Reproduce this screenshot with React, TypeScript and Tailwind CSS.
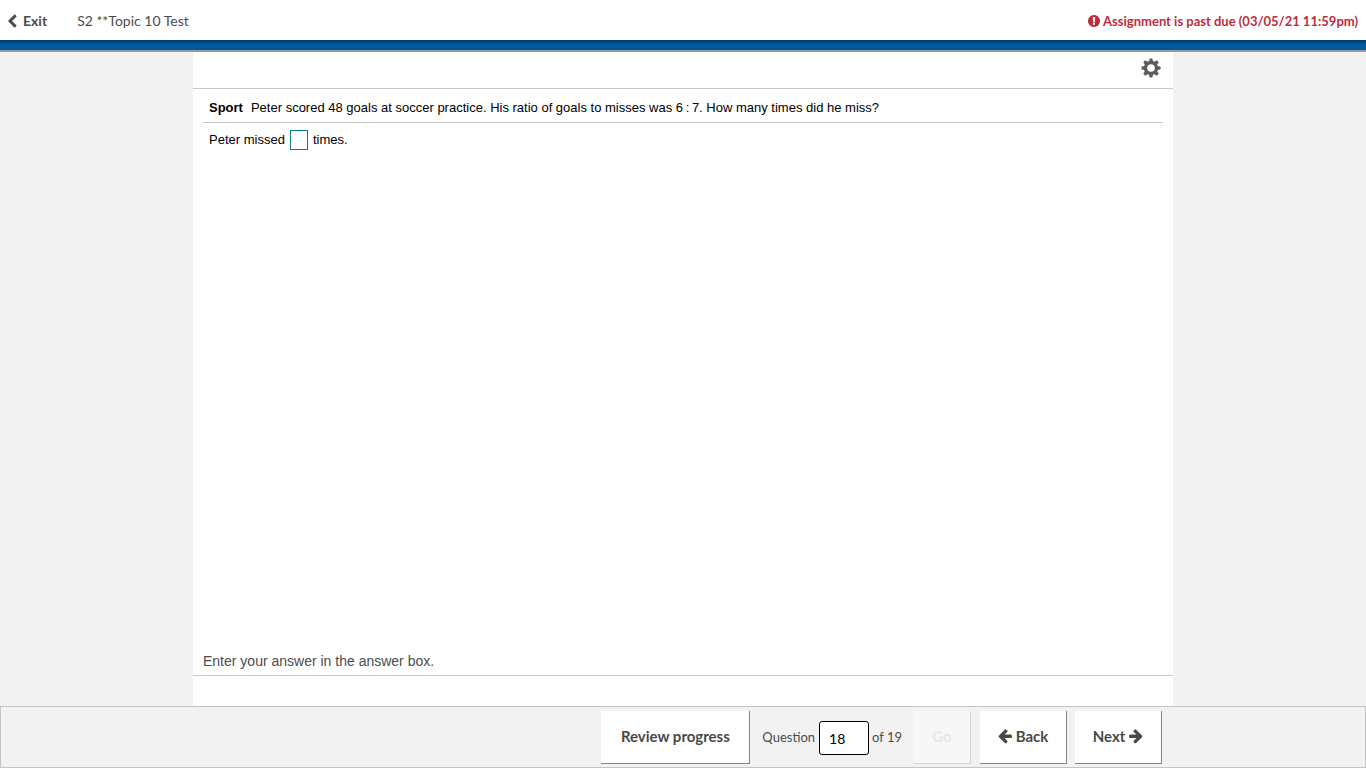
import { useState } from "react";

const TEETH = [0, 45, 90, 135, 180, 225, 270, 315];

const ARROW =
  "M1536 640v128q0 53-32.5 90.5t-84.5 37.5h-704l293 294q38 36 38 90t-38 90l-75 76q-37 37-90 37-52 0-91-37l-651-652q-37-37-37-90 0-52 37-91l651-650q38-38 91-38 52 0 90 38l75 74q38 38 38 91t-38 91l-293 293h704q52 0 84.5 37.5t32.5 90.5z";

const CHEVRON =
  "M1427 301l-531 531 531 531q19 19 19 45t-19 45l-166 166q-19 19-45 19t-45-19l-742-742q-19-19-19-45t19-45l742-742q19-19 45-19t45 19l166 166q19 19 19 45t-19 45z";

const ALERT =
  "M896 128q209 0 385.5 103t279.5 279.5 103 385.5-103 385.5-279.5 279.5-385.5 103-385.5-103-279.5-279.5-103-385.5 103-385.5 279.5-279.5 385.5-103zm128 1247v-190q0-14-9-23.5t-22-9.5h-192q-13 0-23 10t-10 23v190q0 13 10 23t23 10h192q13 0 22-9.5t9-23.5zm-2-344l18-621q0-12-10-18-10-8-24-8h-220q-14 0-24 8-10 6-10 18l17 621q0 10 10 17.5t24 7.5h185q14 0 23.5-7.5t10.5-17.5z";

function GearIcon() {
  return (
    <svg viewBox="0 0 20 20" className="size-5" aria-hidden="true">
      <circle cx="10" cy="10" r="5.5" fill="none" stroke="currentColor" strokeWidth="3.4" />
      {TEETH.map((angle) => (
        <path key={angle} d="M7.8 4 L8.7 0.4 H11.3 L12.2 4 Z" fill="currentColor" transform={`rotate(${angle} 10 10)`} />
      ))}
    </svg>
  );
}

function ArrowIcon({ flipped = false }: { flipped?: boolean }) {
  return (
    <svg viewBox="0 0 1536 1664" className="h-[15px] w-3.5" fill="currentColor" aria-hidden="true">
      <path d={ARROW} transform={flipped ? "matrix(-1 0 0 1 1536 110)" : "translate(0 110)"} />
    </svg>
  );
}

const navButton =
  "flex h-[53px] items-center justify-center gap-1 border-r border-b border-[#858585] bg-white text-[15px] font-bold text-[#484848]";

export default function App() {
  const [answer, setAnswer] = useState("");
  const [question, setQuestion] = useState("18");

  return (
    <div className="flex min-h-screen flex-col bg-[#f2f2f2] font-['Lato',sans-serif] text-sm text-[#4c4c4c]">
      <header className="shrink-0">
        <div className="flex h-10 items-center bg-white px-2 pt-0.5">
          <a href="#exit" className="flex items-center gap-1.5 font-bold">
            <svg viewBox="400 0 1100 1664" className="h-3.5 w-[9px]" fill="currentColor" aria-hidden="true">
              <path d={CHEVRON} />
            </svg>
            Exit
          </a>
          <h1 className="ml-[30px]">S2 **Topic 10 Test</h1>
          <p className="ml-auto flex items-center gap-[3px] text-[13px] font-bold text-[#c02c3c]">
            <svg viewBox="128 128 1536 1536" className="size-3" fill="currentColor" aria-hidden="true">
              <path d={ALERT} />
            </svg>
            Assignment is past due (03/05/21 11:59pm)
          </p>
        </div>
        <div className="h-3 border-b-2 border-[#929a9d] bg-linear-to-b from-[#003b66] via-[#005a9c] via-45% to-[#005a9c]" />
      </header>

      <main className="mx-auto flex w-full max-w-[980px] grow flex-col bg-white font-['Liberation_Sans',sans-serif]">
        <div className="flex h-[37px] items-center justify-end border-b border-[#c8c8c8] px-3 pb-1">
          <button type="button" aria-label="Settings" className="text-[#5c5c5c]">
            <GearIcon />
          </button>
        </div>
        <section className="flex grow flex-col px-2.5 text-[13px] text-black">
          <p className="border-b border-[#c8c8c8] px-1.5 pt-2 pb-1 leading-[21px]">
            <strong className="mr-2">Sport</strong>
            Peter scored 48 goals at soccer practice. His ratio of goals to misses was 6{"\u2009"}:{"\u2009"}7. How many times did he miss?
          </p>
          <label className="flex items-center px-1.5 pt-[7px] leading-5">
            Peter missed
            <input
              aria-label="Number of misses"
              value={answer}
              onChange={(e) => setAnswer(e.target.value)}
              className="mx-[5px] h-5 w-[18px] border border-[#0b7c8c] bg-white text-center outline-none"
            />
            times.
          </label>
        </section>
        <p className="border-b border-[#c8c8c8] px-2.5 pb-1 leading-5">Enter your answer in the answer box.</p>
        <div className="h-[30px]" />
      </main>

      <footer className="shrink-0 border border-[#c4c4c4]">
        <nav className="mx-auto flex h-15 w-full max-w-[980px] items-center justify-end pr-[11px] text-[13px]">
          <button type="button" className={`${navButton} w-[149px]`}>Review progress</button>
          <label className="ml-3 flex items-center gap-1">
            Question
            <input
              value={question}
              onChange={(e) => setQuestion(e.target.value)}
              className="mt-0.5 h-[34px] w-[50px] rounded-[3px] border border-black bg-white px-[9px] text-sm text-black outline-none"
            />
          </label>
          <span className="ml-[3px]">of 19</span>
          <button type="button" disabled className="ml-3 flex h-[53px] w-[57px] items-center justify-center border-r border-b border-[#d4d4d4] bg-[#f7f7f7] text-[15px] font-bold text-[#e6e6e6]">
            Go
          </button>
          <button type="button" className={`${navButton} ml-[9px] w-[87px]`}>
            <ArrowIcon />
            Back
          </button>
          <button type="button" className={`${navButton} ml-2 w-[87px]`}>
            Next
            <ArrowIcon flipped />
          </button>
        </nav>
      </footer>
    </div>
  );
}
